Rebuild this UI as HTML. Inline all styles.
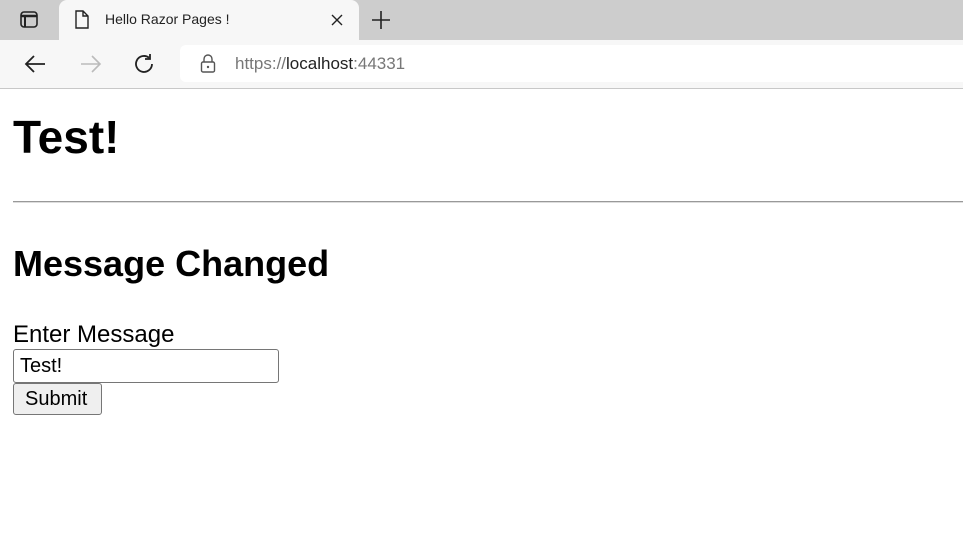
<!DOCTYPE html>
<html><head><style>
body{margin:0;width:963px;height:533px;overflow:hidden;font-family:"Liberation Sans",sans-serif;background:#fff;position:relative}
.tabs{position:absolute;left:0;top:0;width:963px;height:40px;background:#cdcdcd}
.tab{position:absolute;left:59px;top:0;width:300px;height:40px;background:#f7f7f7;border-radius:8px 8px 0 0}
.bar{position:absolute;left:0;top:40px;width:963px;height:48px;background:#f7f7f7;border-bottom:1px solid #c8c8c8}
.addr{position:absolute;left:180px;top:5px;width:800px;height:37px;background:#fff;border-radius:6px}
.t{position:absolute;white-space:nowrap}
</style></head><body>
<div class="tabs">
<svg class="t" style="left:20px;top:11px" width="19" height="18"><rect x="1" y="1" width="16" height="15" rx="3" fill="none" stroke="#222" stroke-width="1.6"/><line x1="1" y1="5" x2="17" y2="5" stroke="#222" stroke-width="2.5"/><line x1="5" y1="5" x2="5" y2="16" stroke="#222" stroke-width="2"/></svg>
<div class="tab">
<svg class="t" style="left:15px;top:10px" width="16" height="20"><path d="M2 1h7l5 5v12H2z M9 1v5h5" fill="none" stroke="#222" stroke-width="1.4"/></svg>
<div class="t" style="left:46px;top:11px;font-size:14px;color:#222">Hello Razor Pages !</div>
<svg class="t" style="left:272px;top:14px" width="12" height="12"><path d="M1 1l10 10M11 1L1 11" stroke="#222" stroke-width="1.4"/></svg>
</div>
<svg class="t" style="left:371px;top:10px" width="20" height="20"><path d="M10 1v18M1 10h18" stroke="#222" stroke-width="1.6"/></svg>
</div>
<div class="bar">
<svg class="t" style="left:24px;top:14px" width="22" height="20"><path d="M21 10H3M10 2L2 10l8 8" fill="none" stroke="#222" stroke-width="1.8"/></svg>
<svg class="t" style="left:80px;top:14px" width="22" height="20"><path d="M1 10h18M12 2l8 8-8 8" fill="none" stroke="#bbb" stroke-width="1.6"/></svg>
<svg class="t" style="left:134px;top:13px" width="22" height="22"><path d="M18 11a8 8 0 1 1-3-6.3M16 1v5h-5" fill="none" stroke="#222" stroke-width="1.8"/></svg>
<div class="addr">
<svg class="t" style="left:20px;top:9px" width="16" height="20"><path d="M4 8V5a4 4 0 0 1 8 0v3" fill="none" stroke="#555" stroke-width="1.4"/><rect x="1.5" y="8" width="13" height="10" rx="1.5" fill="none" stroke="#555" stroke-width="1.4"/><circle cx="8" cy="13" r="1.2" fill="#555"/></svg>
<div class="t" style="left:55px;top:9px;font-size:17px;color:#777">https://<span style="color:#222">localhost</span>:44331</div>
</div>
</div>
<div class="t" style="left:13px;top:110px;font-size:46px;font-weight:bold">Test!</div>
<div style="position:absolute;left:13px;top:201px;width:950px;height:0;border-top:1px solid #999;border-bottom:1px solid #ddd"></div>
<div class="t" style="left:13px;top:243px;font-size:36px;font-weight:bold">Message Changed</div>
<div class="t" style="left:13px;top:321px;font-size:24px">Enter Message</div>
<div style="position:absolute;left:13px;top:349px;width:264px;height:32px;border:1px solid #767676;border-radius:3px"></div>
<div class="t" style="left:20px;top:355px;font-size:20px">Test!</div>
<div style="position:absolute;left:13px;top:383px;width:87px;height:30px;border:1px solid #767676;border-radius:3px;background:#efefef"></div>
<div class="t" style="left:25px;top:388px;font-size:20px">Submit</div>
</body></html>
